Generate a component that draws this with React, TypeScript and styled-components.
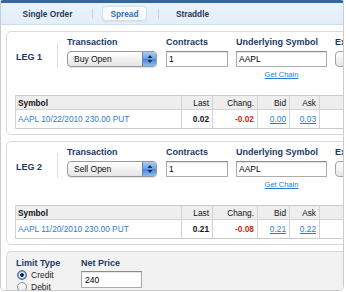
import React from "react";
import styled, { createGlobalStyle } from "styled-components";

const GlobalStyle = createGlobalStyle`
  html, body { margin: 0; padding: 0; background: #fff; }
  body { font-family: "Liberation Sans", Arial, sans-serif; }
`;

type Leg = {
  name: string;
  transaction: string;
  contracts: string;
  symbol: string;
  option: string;
  last: string;
  change: string;
  bid: string;
  ask: string;
};

const legs: Leg[] = [
  {
    name: "LEG 1",
    transaction: "Buy Open",
    contracts: "1",
    symbol: "AAPL",
    option: "AAPL 10/22/2010 230.00 PUT",
    last: "0.02",
    change: "-0.02",
    bid: "0.00",
    ask: "0.03",
  },
  {
    name: "LEG 2",
    transaction: "Sell Open",
    contracts: "1",
    symbol: "AAPL",
    option: "AAPL 11/20/2010 230.00 PUT",
    last: "0.21",
    change: "-0.08",
    bid: "0.21",
    ask: "0.22",
  },
];

const StepperIcon = () => (
  <svg width="6" height="10" viewBox="0 0 6 10">
    <path d="M3 1 L5.4 4 L0.6 4 Z" fill="#1d2b44" />
    <path d="M3 9 L5.4 6 L0.6 6 Z" fill="#1d2b44" />
  </svg>
);

const App = () => {
  return (
    <>
      <GlobalStyle />
      <Frame>
        <TabBar>
          <Tab $width={65}>Single Order</Tab>
          <TabSep />
          <ActiveTab>Spread</ActiveTab>
          <TabSep />
          <Tab $width={49}>Straddle</Tab>
        </TabBar>
        <Content>
          {legs.map((leg) => (
            <Card key={leg.name}>
              <TopRow>
                <LegCell>{leg.name}</LegCell>
                <Field $gap={9}>
                  <FieldLabel>Transaction</FieldLabel>
                  <SelectBox $width={90}>
                    <SelectText>{leg.transaction}</SelectText>
                    <Stepper>
                      <StepperIcon />
                    </Stepper>
                  </SelectBox>
                </Field>
                <Field $gap={9}>
                  <FieldLabel>Contracts</FieldLabel>
                  <TextInput $width={62} defaultValue={leg.contracts} />
                </Field>
                <Field $gap={8}>
                  <FieldLabel>Underlying Symbol</FieldLabel>
                  <TextInput $width={91} defaultValue={leg.symbol} />
                  <ChainLink href="#">Get Chain</ChainLink>
                </Field>
                <Field $gap={8}>
                  <FieldLabel>Expiration</FieldLabel>
                  <PlainSelect />
                </Field>
              </TopRow>
              <QuoteTable>
                <colgroup>
                  <col style={{ width: 166 }} />
                  <col style={{ width: 31 }} />
                  <col style={{ width: 45 }} />
                  <col style={{ width: 32 }} />
                  <col style={{ width: 30 }} />
                  <col style={{ width: 40 }} />
                </colgroup>
                <thead>
                  <tr>
                    <Th $left>Symbol</Th>
                    <Th>Last</Th>
                    <Th>Chang.</Th>
                    <Th>Bid</Th>
                    <Th>Ask</Th>
                    <Th />
                  </tr>
                </thead>
                <tbody>
                  <tr>
                    <Td $left>
                      <SymbolLink>{leg.option}</SymbolLink>
                    </Td>
                    <Td $bold>{leg.last}</Td>
                    <Td $bold $color="#cc1f1a">
                      {leg.change}
                    </Td>
                    <Td>
                      <QuoteLink href="#">{leg.bid}</QuoteLink>
                    </Td>
                    <Td>
                      <QuoteLink href="#">{leg.ask}</QuoteLink>
                    </Td>
                    <Td />
                  </tr>
                </tbody>
              </QuoteTable>
            </Card>
          ))}
          <Footer>
            <LimitCol>
              <FieldLabel>Limit Type</FieldLabel>
              <RadioRow>
                <RadioDot $checked />
                Credit
              </RadioRow>
              <RadioRow>
                <RadioDot />
                Debit
              </RadioRow>
            </LimitCol>
            <NetCol>
              <FieldLabel>Net Price</FieldLabel>
              <NetInput defaultValue="240" />
            </NetCol>
          </Footer>
        </Content>
      </Frame>
    </>
  );
};

export default App;

const Frame = styled.div`
  width: 344px;
  height: 291px;
  box-sizing: border-box;
  border: 1px solid #c9cbce;
  border-top: 3px solid #33679f;
  border-radius: 3px 3px 5px 5px;
  overflow: hidden;
  display: flex;
  flex-direction: column;
  background: #fff;
`;

const TabBar = styled.div`
  height: 21px;
  flex-shrink: 0;
  display: flex;
  align-items: center;
  padding-left: 14px;
  background: linear-gradient(#eaf3fc, #e4eef9);
  border-top: 1px solid #b9d0e8;
  border-bottom: 1px solid #cadced;
  box-sizing: content-box;
  margin-top: -1px;
`;

const Tab = styled.div<{ $width: number }>`
  width: ${(p) => p.$width}px;
  text-align: center;
  font-size: 8.3px;
  font-weight: bold;
  color: #1f3658;
`;

const TabSep = styled.div`
  width: 1px;
  height: 10px;
  background: #c3d5e8;
  margin: 0 9px 0 12px;
  & + div + & {
    margin-left: 11px;
  }
`;

const ActiveTab = styled.div`
  width: 45px;
  height: 15px;
  box-sizing: border-box;
  display: flex;
  align-items: center;
  justify-content: center;
  background: linear-gradient(#ffffff, #f6f8fa);
  border: 1px solid #d3dde7;
  border-radius: 4px;
  box-shadow: 0 1px 1px rgba(0, 0, 0, 0.06);
  font-size: 8.3px;
  font-weight: bold;
  color: #2a6fc4;
`;

const Content = styled.div`
  flex: 1;
  display: flex;
  flex-direction: column;
  padding: 6px 0 0 5px;
  min-height: 0;
`;

const Card = styled.section`
  width: 400px;
  height: 104px;
  flex-shrink: 0;
  box-sizing: border-box;
  border: 1px solid #dadada;
  border-radius: 5px;
  margin-bottom: 6px;
  padding-top: 5px;
`;

const TopRow = styled.div`
  display: flex;
  align-items: flex-start;
  height: 42px;
`;

const LegCell = styled.div`
  width: 51px;
  height: 25px;
  margin-top: 6px;
  padding: 3px 0 0 9px;
  box-sizing: border-box;
  border-right: 1px solid #dedede;
  display: flex;
  align-items: center;
  font-size: 9px;
  font-weight: bold;
  color: #1c3a66;
`;

const Field = styled.div<{ $gap: number }>`
  display: flex;
  flex-direction: column;
  margin-left: ${(p) => p.$gap}px;
`;

const FieldLabel = styled.div`
  font-size: 9px;
  line-height: 11px;
  height: 11px;
  font-weight: bold;
  color: #1c3a66;
  white-space: nowrap;
`;

const SelectBox = styled.div<{ $width: number }>`
  width: ${(p) => p.$width}px;
  height: 16px;
  margin-top: 3px;
  box-sizing: border-box;
  display: flex;
  align-items: center;
  border: 1px solid #9a9a9a;
  border-radius: 4px;
  background: linear-gradient(#ffffff, #f0f0f0 60%, #e4e4e4);
  box-shadow: 0 1px 1px rgba(0, 0, 0, 0.12);
  overflow: hidden;
`;

const SelectText = styled.span`
  flex: 1;
  padding-left: 6px;
  font-size: 8.5px;
  color: #111;
`;

const Stepper = styled.span`
  width: 13px;
  height: 100%;
  display: flex;
  align-items: center;
  justify-content: center;
  border-left: 1px solid #5a86bf;
  background: linear-gradient(#a9cdf5, #6aa2e4 48%, #4a88d8 52%, #8dbcf0);
`;

const PlainSelect = styled.div`
  width: 70px;
  height: 16px;
  margin-top: 3px;
  box-sizing: border-box;
  border: 1px solid #a3a3a3;
  border-radius: 4px;
  background: linear-gradient(#ffffff, #e6e6e6);
`;

const TextInput = styled.input<{ $width: number }>`
  width: ${(p) => p.$width}px;
  height: 16px;
  margin: 3px 0 0;
  padding: 0 0 0 2px;
  box-sizing: border-box;
  border: 1px solid #ababab;
  border-top-color: #8c8c8c;
  box-shadow: inset 0 1px 1px rgba(0, 0, 0, 0.12);
  font-family: "Liberation Sans", Arial, sans-serif;
  font-size: 8.5px;
  color: #000;
  outline: none;
`;

const ChainLink = styled.a`
  margin-top: 3.5px;
  text-align: center;
  font-size: 7.5px;
  line-height: 8px;
  color: #2c7cd3;
  text-decoration: underline;
`;

const QuoteTable = styled.table`
  margin: 16px 0 0 8px;
  border-collapse: collapse;
  table-layout: fixed;
  width: 344px;
  border: 1px solid #c9c9c9;
`;

const Th = styled.th<{ $left?: boolean }>`
  height: 13px;
  padding: 0 3px 0 2px;
  background: #eeeeee;
  border-left: 1px solid #d3d3d3;
  border-bottom: 1px solid #d3d3d3;
  text-align: ${(p) => (p.$left ? "left" : "right")};
  font-size: 8.3px;
  font-weight: ${(p) => (p.$left ? "bold" : "normal")};
  color: #111;
`;

const Td = styled.td<{ $left?: boolean; $bold?: boolean; $color?: string }>`
  height: 18px;
  padding: 0 3px 0 2px;
  border-left: 1px solid #d3d3d3;
  text-align: ${(p) => (p.$left ? "left" : "right")};
  font-size: 8.3px;
  font-weight: ${(p) => (p.$bold ? "bold" : "normal")};
  color: ${(p) => p.$color ?? "#111"};
  white-space: nowrap;
`;

const SymbolLink = styled.span`
  color: #2c7cd3;
`;

const QuoteLink = styled.a`
  color: #2c7cd3;
  text-decoration: underline;
`;

const Footer = styled.div`
  flex: 1;
  width: 400px;
  display: flex;
  box-sizing: border-box;
  border: 1px solid #d8d8d8;
  border-right: none;
  border-bottom: none;
  border-top-left-radius: 5px;
  background: #f2f2f2;
  padding: 6px 0 0 9px;
`;

const LimitCol = styled.div`
  width: 65px;
  display: flex;
  flex-direction: column;
`;

const RadioRow = styled.div`
  display: flex;
  align-items: center;
  height: 12px;
  line-height: 12px;
  font-size: 8.5px;
  color: #222;
  padding-left: 1px;
  &:first-of-type {
    margin-top: 1px;
  }
`;

const RadioDot = styled.span<{ $checked?: boolean }>`
  width: 10px;
  height: 10px;
  box-sizing: border-box;
  border-radius: 50%;
  margin-right: 4px;
  border: 1px solid ${(p) => (p.$checked ? "#4b6d98" : "#8e8e8e")};
  background: ${(p) =>
    p.$checked
      ? "radial-gradient(circle, #1b2c48 0 1.6px, #eef5fd 2.2px 2.6px, #7fb2ea 3.3px, #3f7bc9 100%)"
      : "linear-gradient(#ffffff, #e7e7e7)"};
`;

const NetCol = styled.div`
  display: flex;
  flex-direction: column;
`;

const NetInput = styled.input`
  width: 61px;
  height: 17px;
  margin: 2px 0 0;
  padding: 0 0 0 3px;
  box-sizing: border-box;
  border: 1px solid #ababab;
  border-top-color: #8c8c8c;
  box-shadow: inset 0 1px 1px rgba(0, 0, 0, 0.1);
  background: #fff;
  font-family: "Liberation Sans", Arial, sans-serif;
  font-size: 8.5px;
  color: #000;
  outline: none;
`;
